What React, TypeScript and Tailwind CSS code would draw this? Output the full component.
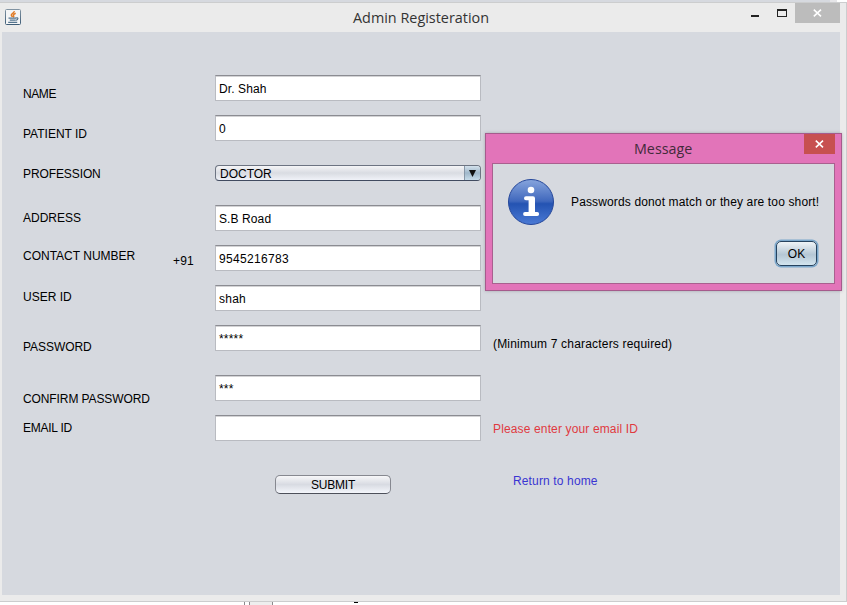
import type { ReactNode } from 'react';

const sans = 'font-["Liberation_Sans",Arial,sans-serif]';

const labels = [
  { text: 'NAME', cls: 'mt-[54px] tracking-[-0.4px]' },
  { text: 'PATIENT ID', cls: 'mt-6' },
  { text: 'PROFESSION', cls: 'mt-6 tracking-[-0.1px]' },
  { text: 'ADDRESS', cls: 'mt-7' },
  { text: 'CONTACT NUMBER', cls: 'mt-[22px]' },
  { text: 'USER ID', cls: 'mt-[25px]' },
  { text: 'PASSWORD', cls: 'mt-[34px] tracking-[-0.05px]' },
  { text: 'CONFIRM PASSWORD', cls: 'mt-9 tracking-[-0.1px]' },
  { text: 'EMAIL ID', cls: 'mt-[13px] tracking-[-0.25px]' },
];

function Field({ children, className = 'mt-3.5' }: { children?: ReactNode; className?: string }) {
  return (
    <div
      className={`flex h-[26px] w-[266px] shrink-0 items-start border border-[#b9bbc1] border-t-[#8b8c92] bg-white pl-[3px] shadow-[inset_0_1px_0_#d3d3d5] ${className}`}
    >
      {children}
    </div>
  );
}

function JavaIcon() {
  return (
    <svg width="16" height="16" viewBox="0 0 16 16" fill="none">
      <defs>
        <linearGradient id="jb" x1="0" y1="0" x2="0" y2="1">
          <stop stopColor="#8193a2" />
          <stop offset="1" stopColor="#3f5d77" />
        </linearGradient>
      </defs>
      <rect x=".5" y=".5" width="15" height="15" rx="1" fill="#f4f5f6" stroke="url(#jb)" />
      <path d="M9.300 2.200C9.500 4 6 4.500 6.300 6.100c.2.8 1 1.200 1.300 2M10.700 4.300C9 5 8 6 8.600 6.900c.4.6.1 1.100-.4 1.500" stroke="#e07a25" strokeWidth="1.500" />
      <path d="M3.500 9.100h7.500M4.800 11.100h5.700M3.200 13.400h9" stroke="#55758f" strokeWidth="1.300" />
      <path d="M10.800 9c2.800-1 3 1.700-.2 2.300" stroke="#55758f" strokeWidth="1.200" />
    </svg>
  );
}

function InfoIcon() {
  return (
    <svg width="48" height="48" viewBox="0 0 48 48">
      <defs>
        <linearGradient id="info" x1="0" y1="0" x2="0" y2="1">
          <stop stopColor="#87a5dd" />
          <stop offset=".48" stopColor="#4068bd" />
          <stop offset=".54" stopColor="#2453b2" />
          <stop offset="1" stopColor="#4b7ad5" />
        </linearGradient>
      </defs>
      <circle cx="24" cy="24" r="22.5" fill="url(#info)" stroke="#25479a" />
      <circle cx="24" cy="12" r="3.3" fill="#fff" />
      <path d="M19 18.300h7q2 0 2 2v13.700h2.200q1.900 0 1.900 2t-1.900 2H18q-1.900 0-1.900-2t1.900-2h3.600V22.300H19q-2 0-2-2t2-2z" fill="#fff" />
    </svg>
  );
}

function CloseGlyph() {
  return (
    <svg width="9" height="8" viewBox="0 0 9 8" stroke="#fff" strokeWidth="1.6">
      <path d="M.8.700l7.200 6.600M8 .700L.8 7.300" />
    </svg>
  );
}

function Dialog() {
  return (
    <div className="absolute left-[485px] top-[133px] flex h-[158px] w-[357px] flex-col border border-[#a55b8c] bg-[#e274b9] px-1.5 pb-1.5 shadow-[0_0_3px_rgba(80,80,90,0.35)]">
      <div className="flex h-[29px] shrink-0">
        <div className='flex-1 pl-[142px] pt-[5px] font-["Open_Sans","Noto_Sans",sans-serif] text-[14.3px] leading-5 text-[#422b3b]'>
          Message
        </div>
        <div className="flex h-5 w-[31px] items-center justify-center bg-[#c75050]">
          <CloseGlyph />
        </div>
      </div>
      <div className="flex flex-1 flex-col border border-[#a9608f] bg-[#d6d9df]">
        <div className="flex pl-3.5 pt-3.5">
          <InfoIcon />
          <span className="ml-4 mt-4 whitespace-nowrap leading-4 tracking-[0.14px]">
            Passwords donot match or they are too short!
          </span>
        </div>
        <button className="ml-[283px] mt-[15px] flex h-[25px] w-[41px] items-center justify-center rounded-[5px] border border-[#26435f] bg-linear-to-b from-[#eff4f7] via-[#b5c7d5] via-55% to-[#d3e5ef] shadow-[0_0_0_1.5px_#7ba7cb]">
          <span className="pt-px text-[12px] leading-4">OK</span>
        </button>
      </div>
    </div>
  );
}

export default function App() {
  return (
    <div className={`relative flex h-[605px] w-[847px] flex-col overflow-hidden bg-white text-[12px] text-black ${sans}`}>
      <div className="flex h-0.5 shrink-0">
        <div className="w-[830px] bg-[#d6d9df]" />
        <div className="w-[7px] bg-[#e5e5e8]" />
      </div>
      <div className="flex h-[600px] shrink-0 flex-col border-b border-r border-t border-[#cccdce] bg-[#ebebeb]">
        <header className="flex h-[29px] shrink-0">
          <div className="w-[353px] pl-[5px] pt-1.5">
            <JavaIcon />
          </div>
          <div className='flex-1 pt-[5px] font-["Open_Sans","Noto_Sans",sans-serif] text-[14.4px] leading-5 text-[#333]'>
            Admin Registeration
          </div>
          <svg className="mr-1 mt-[5px]" width="40" height="16" viewBox="0 0 40 16" fill="none">
            <path d="M0 8h8" stroke="#222" strokeWidth="2" />
            <path d="M26 1h10v8H26z" fill="#222" />
            <path d="M27 3h8v5h-8z" fill="#ebebeb" />
          </svg>
          <div className="mr-1.5 flex h-5 w-[45px] items-center justify-center bg-[#bcbcbc]">
            <CloseGlyph />
          </div>
        </header>
        <main className="ml-0.5 flex h-[563px] w-[838px] shrink-0 bg-[#d6d9df]">
          <div className="flex w-[150px] flex-col pl-[21px]">
            {labels.map((l) => (
              <span key={l.text} className={`whitespace-nowrap leading-4 ${l.cls}`}>
                {l.text}
              </span>
            ))}
          </div>
          <div className="w-[63px] pl-[21px] pt-[221px] leading-4 tracking-[0.15px]">+91</div>
          <div className="flex w-[266px] flex-col">
            <Field className="mt-[43px]"><span className="pt-[5px] leading-4 tracking-[0.1px]">Dr. Shah</span></Field>
            <Field><span className="pt-[5px] leading-4">0</span></Field>
            <div className="mt-6 flex h-4 shrink-0 overflow-hidden rounded-[4px] border border-[#6d7482] border-b-[#414b60] bg-linear-to-b from-[#f5f5f7] via-[#d9dce2] via-50% to-[#f0f2f8]">
              <span className="flex-1 pl-1 leading-4">DOCTOR</span>
              <span className="flex w-4 items-center justify-center border-l border-[#8797a8] bg-linear-to-b from-[#d3e1ec] via-[#9fb7ca] to-[#c7dcea]">
                <svg width="7" height="7" viewBox="0 0 7 7">
                  <path d="M0 0h7L3.500 7z" fill="#111" />
                </svg>
              </span>
            </div>
            <Field className="mt-6"><span className="pt-[5px] leading-4 tracking-[0.1px]">S.B Road</span></Field>
            <Field><span className="pt-[5px] leading-4 tracking-[0.32px]">9545216783</span></Field>
            <Field><span className="pt-[5px] leading-4 tracking-[0.25px]">shah</span></Field>
            <Field><span className="pt-[5px] leading-4 tracking-[0.2px]">*****</span></Field>
            <Field className="mt-6"><span className="pt-[5px] leading-4 tracking-[0.2px]">***</span></Field>
            <Field />
            <button className="ml-[60px] mt-[34px] flex h-[19px] w-[116px] shrink-0 items-center justify-center rounded-[5px] border border-[#868890] border-b-[#4d505a] bg-linear-to-b from-[#f7f7f9] via-[#d8dbe2] via-50% to-[#f4f6fb]">
              <span className="leading-4 tracking-[-0.2px]">SUBMIT</span>
            </button>
          </div>
          <div className="flex flex-1 flex-col pl-3 pt-[304px] leading-4">
            <span className="tracking-[0.19px]">(Minimum 7 characters required)</span>
            <span className="mt-[69px] tracking-[0.14px] text-[#e0393f]">Please enter your email ID</span>
            <a className="ml-5 mt-9 tracking-[0.14px] text-[#3a35d2]">Return to home</a>
          </div>
        </main>
      </div>
      <footer className="flex flex-1 pl-[244px]">
        <div className="w-[6px] border-x border-[#8b8b8d]" />
        <div className="w-[23px] border-r border-[#8b8b8d] bg-[#eee]" />
        <div className="ml-[81px] h-px w-1 bg-black" />
      </footer>
      <Dialog />
    </div>
  );
}
